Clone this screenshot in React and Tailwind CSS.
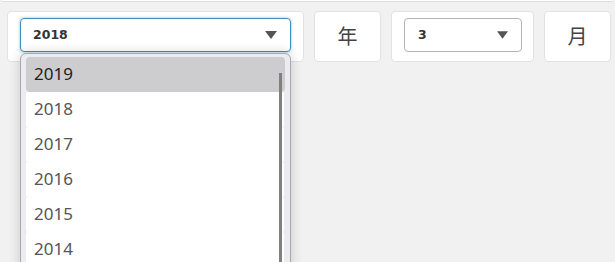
import React from "react";

const years = ["2019", "2018", "2017", "2016", "2015", "2014"];

function Arrow({ w = 12 }) {
  return (
    <svg width={w} height="8" viewBox="0 0 12 8" className="shrink-0">
      <path d="M0 0 L12 0 L6 8 Z" fill="#555" />
    </svg>
  );
}

export default function App() {
  return (
    <div
      className="w-[615px] h-[262px] bg-[#f1f1f1] overflow-hidden relative"
      style={{ fontFamily: '"DejaVu Sans", sans-serif' }}
    >
      <div className="mx-[1px] h-[2px] bg-white border-b border-[#dcdcdc] rounded-b-[3px]" />
      <div className="flex gap-[10px] pl-[7px] pt-[9px]">
        <div className="w-[297px] h-[51px] bg-white border border-[#e2e2e2] rounded-[4px] px-[12px] pt-[6px]">
          <div className="h-[34px] border border-[#3d8fc1] rounded-[4px] shadow-[0_0_3px_rgba(61,143,193,0.6)] flex items-center justify-between pl-[12px] pr-[13px]">
            <span className="text-[12.5px] font-bold text-[#333]">2018</span>
            <Arrow />
          </div>
        </div>
        <div
          className="w-[67px] h-[51px] bg-white border border-[#e2e2e2] rounded-[4px] flex items-center justify-center pb-[1px] text-[20px] text-[#444]"
          style={{ fontFamily: '"Noto Sans CJK JP", sans-serif' }}
        >
          年
        </div>
        <div className="w-[143px] h-[51px] bg-white border border-[#e2e2e2] rounded-[4px] pl-[12px] pr-[11px] pt-[6px]">
          <div className="h-[34px] border border-[#b4b4b4] rounded-[4px] flex items-center justify-between pl-[13px] pr-[13px]">
            <span className="text-[12.5px] font-bold text-[#333]">3</span>
            <Arrow w={11} />
          </div>
        </div>
        <div
          className="w-[67px] h-[51px] bg-white border border-[#e2e2e2] rounded-[4px] flex items-center justify-center pb-[1px] text-[20px] text-[#444]"
          style={{ fontFamily: '"Noto Sans CJK JP", sans-serif' }}
        >
          月
        </div>
      </div>

      <div className="absolute left-[20px] top-[53px] w-[271px] h-[260px] bg-[#ebebf1] border border-[#a9a9a9] rounded-[6px] shadow-[0_0_12px_rgba(0,0,0,0.18)] pl-[5px] pr-[6px] pt-[3px]">
        <div className="relative" style={{ fontFamily: '"Noto Sans", sans-serif' }}>
          {years.map((y, i) => (
            <div
              key={y}
              className={
                i === 0
                  ? "h-[35px] flex items-center pl-[8px] pb-[2px] text-[17px] text-[#222] bg-[#cdcdcf] rounded-[4px] mr-[-1px]"
                  : "h-[35px] flex items-center pl-[8px] pb-[2px] text-[17px] text-[#555] bg-white rounded-[2px]"
              }
            >
              {y}
            </div>
          ))}
          <div className="absolute left-[253px] top-[16px] w-[3px] h-[240px] bg-[#808080]" />
        </div>
      </div>
    </div>
  );
}
